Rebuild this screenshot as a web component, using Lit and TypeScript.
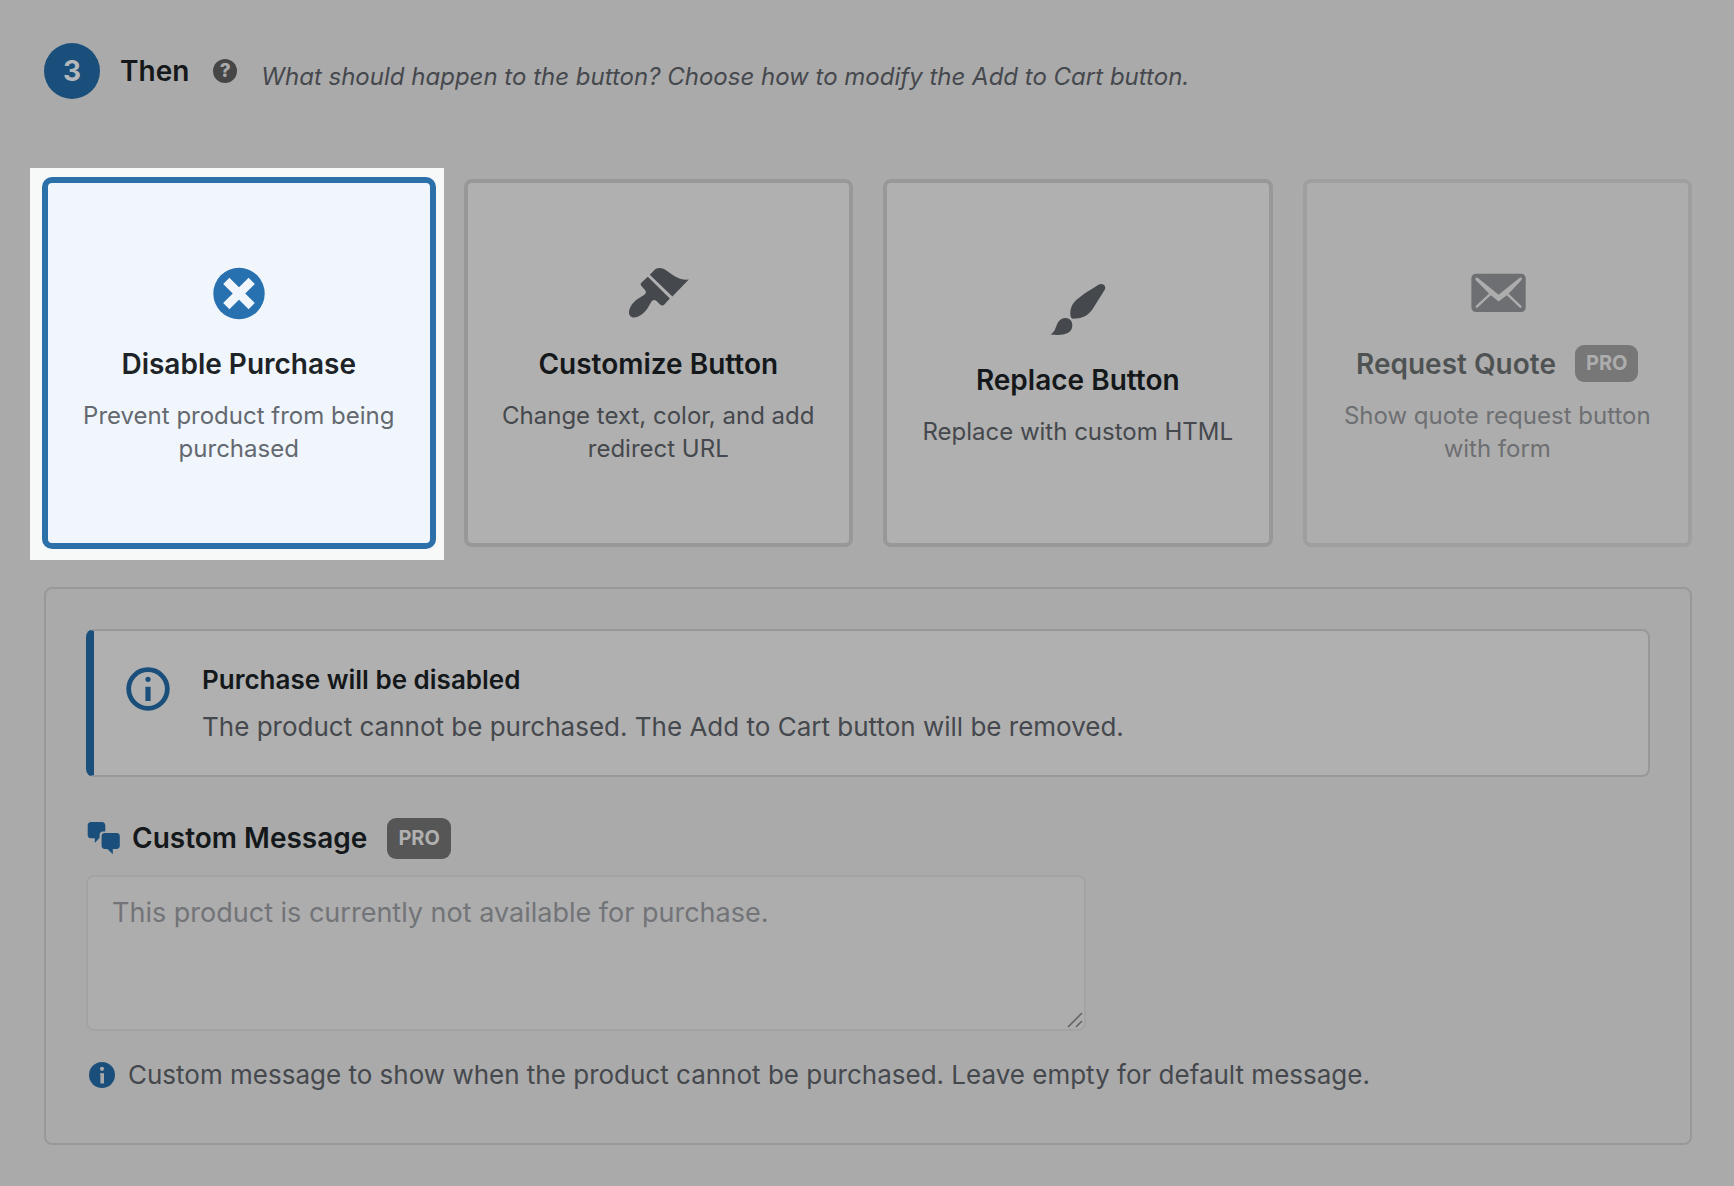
import { LitElement, html, svg, css, nothing, type TemplateResult } from "lit";
import { customElement, state } from "lit/decorators.js";
import { classMap } from "lit/directives/class-map.js";

interface ActionOption {
  id: string;
  title: string;
  text: string;
  icon: TemplateResult;
  pro?: boolean;
}

const dismissIcon = svg`
  <circle cx="32" cy="31.5" r="25.7" fill="currentColor" />
  <path d="M19.3 18.8 44.7 44.2M44.7 18.8 19.3 44.2" stroke="#f0f6fc" stroke-width="8.8" />`;

const wideBrushIcon = svg`
  <path fill="currentColor" d="M23.8 12.8 28 8.4C31.5 5 36 5.8 40 8.2 46 11.8 51.5 18.5 62.8 17.6L46.4 34.5Z" />
  <path fill="currentColor" d="M21.8 14.8 43.8 36.5 38.4 42.4C37 44 35.4 43.8 34 42.4L30.5 39C28.5 37.2 26.5 38 25.4 39.8 22 45.5 20 50 14.5 53.3 10 56 6.5 56 4.5 54.2 2 52 2.8 47.5 5.5 43 9 38 14 35.6 18 33 20.4 31.4 20.3 29.5 18.8 27.8L15.4 24C14.4 22.8 14.4 21.6 15.6 20.6Z" />`;

const thinBrushIcon = svg`
  <path fill="currentColor" d="M52.5 6.8C56.5 4.2 61 8 58.6 12L46.5 31.2C42 38 35.5 40.5 27 40.7 24.6 40.6 24.3 37.5 24.3 35 24.5 27 29 22.5 35 18.2 40.5 14 47 10.3 52.5 6.8Z" />
  <path fill="currentColor" d="M19 40C24 39.6 26.6 43.5 26.3 48 25.8 54.5 20 58.3 4.6 56.5 8.6 54 9 51.5 10.5 47.8 12 43.5 14.5 40.3 19 40Z" />`;

const mailIcon = svg`
  <rect x="6.4" y="11.7" width="54.3" height="38.3" rx="4.5" fill="currentColor" />
  <path fill="#b0b0b0" d="M10.6 17.9C9.4 16.2 11.4 14.6 13 16L33.6 32.8 54.4 16C56.2 14.6 57.8 16.4 56.6 17.9L42.8 32.6 33.6 39.6 25 32.6Z" />
  <path d="M11.8 44.7 25.2 32.2M55.4 44.7 42.4 32.2" stroke="#b0b0b0" stroke-width="2.4" stroke-linecap="round" />`;

@customElement("app-root")
export class AppRoot extends LitElement {
  @state() private selected = "disable";

  private readonly options: ActionOption[] = [
    { id: "disable", title: "Disable Purchase", text: "Prevent product from being purchased", icon: dismissIcon },
    { id: "customize", title: "Customize Button", text: "Change text, color, and add redirect URL", icon: wideBrushIcon },
    { id: "replace", title: "Replace Button", text: "Replace with custom HTML", icon: thinBrushIcon },
    { id: "quote", title: "Request Quote", text: "Show quote request button with form", icon: mailIcon, pro: true },
  ];

  static styles = css`
    :host {
      display: block;
      box-sizing: border-box;
      min-height: 100vh;
      padding: 43px 42px 40px 44px;
      background: #aaaaaa;
      color: #14181b;
      font-family: Inter, "Liberation Sans", sans-serif;
    }
    *, *::before { box-sizing: border-box; }
    h2, h3, p { margin: 0; }
    svg { display: block; flex: none; }

    .header { display: flex; align-items: center; margin-bottom: 80px; }
    .step {
      display: grid; place-items: center; flex: none;
      width: 56px; height: 56px; border-radius: 50%;
      background: #1b4f7b; color: #b4b8bb;
      font-size: 28px; font-weight: 700;
    }
    .title { margin-left: 20px; font-size: 28px; line-height: 36px; font-weight: 600; }
    .help {
      display: grid; place-items: center; flex: none;
      width: 24px; height: 24px; margin-left: 24px; padding: 0;
      border: 0; border-radius: 50%;
      background: #464646; color: #aaaaaa;
      font: 800 19px/24px Inter, sans-serif;
    }
    .lead {
      margin-left: 24px; padding-top: 12px;
      color: #45484d; font-size: 24px; line-height: 32px; font-style: italic;
    }

    .cards {
      display: grid; grid-template-columns: repeat(4, minmax(0, 1fr)); gap: 30px;
      isolation: isolate; margin-bottom: 40px;
    }
    .card {
      position: relative;
      display: flex; flex-direction: column; align-items: center; justify-content: center;
      min-height: 368px; padding: 20px 24px;
      border: 4px solid #98989a; border-radius: 8px;
      background: #b0b0b0; color: #45484d;
      font-family: inherit; text-align: center;
    }
    .card.selected {
      border-color: #2c70aa; background: #f0f6fc; color: #2871b0;
      box-shadow: 0 0 0 2px #2c70aa;
    }
    .card.selected::before {
      content: ""; position: absolute; z-index: -1;
      inset: -15px -14px -17px -18px; background: #f7f8f8;
    }
    .card.locked { opacity: 0.6; }
    .card-title {
      display: flex; align-items: center; gap: 19px; margin: 19px 0 16px;
      color: #14181b; font-size: 28px; line-height: 38px; font-weight: 600;
    }
    .selected .card-title { color: #1d2327; }
    .card-text { color: #45484d; font-size: 24px; line-height: 33px; }
    .selected .card-text { color: #646970; }

    .pro {
      flex: none; padding: 0 11px; border-radius: 9px;
      background: #565656; color: #b0b0b0;
      font-size: 20px; line-height: 37px; font-weight: 700;
    }
    .pro.large { line-height: 41px; }

    .panel { padding: 40px 40px 50px; border: 2px solid #98989a; border-radius: 8px; }
    .notice {
      display: flex; gap: 32px; padding: 31px 32px 30px; margin-bottom: 40px;
      border: 2px solid #98989a; border-left: 8px solid #1b4f7b; border-radius: 8px;
      background: #b0b0b0;
    }
    .notice-icon { margin: 5px 0 0; color: #1b4f7b; }
    .notice-title { margin-bottom: 11px; font-size: 26px; line-height: 36px; font-weight: 600; }
    .notice-text { color: #45484d; font-size: 26px; line-height: 36px; }

    .label-row { display: flex; align-items: center; height: 42px; margin-bottom: 16px; color: #1b4f7b; }
    .label { margin: 0 20px 0 11px; color: #14181b; font-size: 28px; line-height: 36px; font-weight: 600; }
    .field { position: relative; max-width: 1000px; margin-bottom: 26px; }
    .message {
      display: block; width: 100%; height: 156px; padding: 19px 24px;
      border: 2px solid #a3a3a4; border-radius: 8px;
      background: #adadad; color: #14181b;
      font: 27px/34px Inter, sans-serif; resize: none;
    }
    .message::placeholder { color: #727478; opacity: 1; }
    .grip { position: absolute; right: 3px; bottom: 3px; pointer-events: none; color: #606060; }
    .hint { display: flex; align-items: center; gap: 13px; padding-left: 3px; color: #1b4f7b; }
    .hint-text { color: #45484d; font-size: 26px; line-height: 36px; }
  `;

  private renderCard(o: ActionOption) {
    const on = this.selected === o.id;
    return html`
      <button
        type="button"
        class=${classMap({ card: true, selected: on, locked: !!o.pro })}
        aria-pressed=${on ? "true" : "false"}
        ?disabled=${!!o.pro}
        @click=${() => (this.selected = o.id)}
      >
        <svg width="64" height="64" viewBox="0 0 64 64" fill="none" aria-hidden="true">${o.icon}</svg>
        <span class="card-title">${o.title}${o.pro ? html`<span class="pro">PRO</span>` : nothing}</span>
        <span class="card-text">${o.text}</span>
      </button>
    `;
  }

  render() {
    return html`
      <header class="header">
        <span class="step">3</span>
        <h2 class="title">Then</h2>
        <button class="help" type="button">?</button>
        <p class="lead">What should happen to the button? Choose how to modify the Add to Cart button.</p>
      </header>

      <div class="cards">${this.options.map((o) => this.renderCard(o))}</div>

      <section class="panel">
        <div class="notice">
          <svg class="notice-icon" width="44" height="44" viewBox="0 0 44 44" fill="currentColor" aria-hidden="true">
            <circle cx="22" cy="22" r="19.3" fill="none" stroke="currentColor" stroke-width="4.8" />
            <circle cx="22" cy="12.3" r="2.6" />
            <rect x="19.4" y="19.8" width="5.2" height="14.2" />
          </svg>
          <div>
            <h3 class="notice-title">Purchase will be disabled</h3>
            <p class="notice-text">The product cannot be purchased. The Add to Cart button will be removed.</p>
          </div>
        </div>

        <div class="label-row">
          <svg width="35" height="34" viewBox="0 0 35 34" fill="currentColor" aria-hidden="true">
            <path d="M5 1H16C18 1 19.3 2.3 19.3 4.2V10.4H17C14.8 10.4 13.6 11.8 13.6 13.8V16.8L8.8 22V17.3H5C3 17.3 1.7 16 1.7 14V4.2C1.7 2.3 3 1 5 1Z" />
            <path d="M18.8 12H30.6C32.6 12 33.8 13.2 33.8 15.2V24.8C33.8 26.8 32.6 28 30.6 28H26.8V33.2L21.4 28H18.8C16.8 28 15.6 26.8 15.6 24.8V15.2C15.6 13.2 16.8 12 18.8 12Z" />
          </svg>
          <label class="label" for="message">Custom Message</label>
          <span class="pro large">PRO</span>
        </div>
        <div class="field">
          <textarea id="message" class="message" placeholder="This product is currently not available for purchase."></textarea>
          <svg class="grip" width="16" height="16" viewBox="0 0 16 16" fill="none" stroke="currentColor" stroke-width="1.5" aria-hidden="true">
            <path d="M1 15 15 1M9 15l6-6" />
          </svg>
        </div>
        <div class="hint">
          <svg width="26" height="26" viewBox="0 0 26 26" aria-hidden="true">
            <circle cx="13" cy="13" r="13" fill="currentColor" />
            <circle cx="13" cy="6.8" r="2.1" fill="#aaaaaa" />
            <path d="M11 11.2H15V21.4H11.4V12.6H11Z" fill="#aaaaaa" />
          </svg>
          <p class="hint-text">Custom message to show when the product cannot be purchased. Leave empty for default message.</p>
        </div>
      </section>
    `;
  }
}
